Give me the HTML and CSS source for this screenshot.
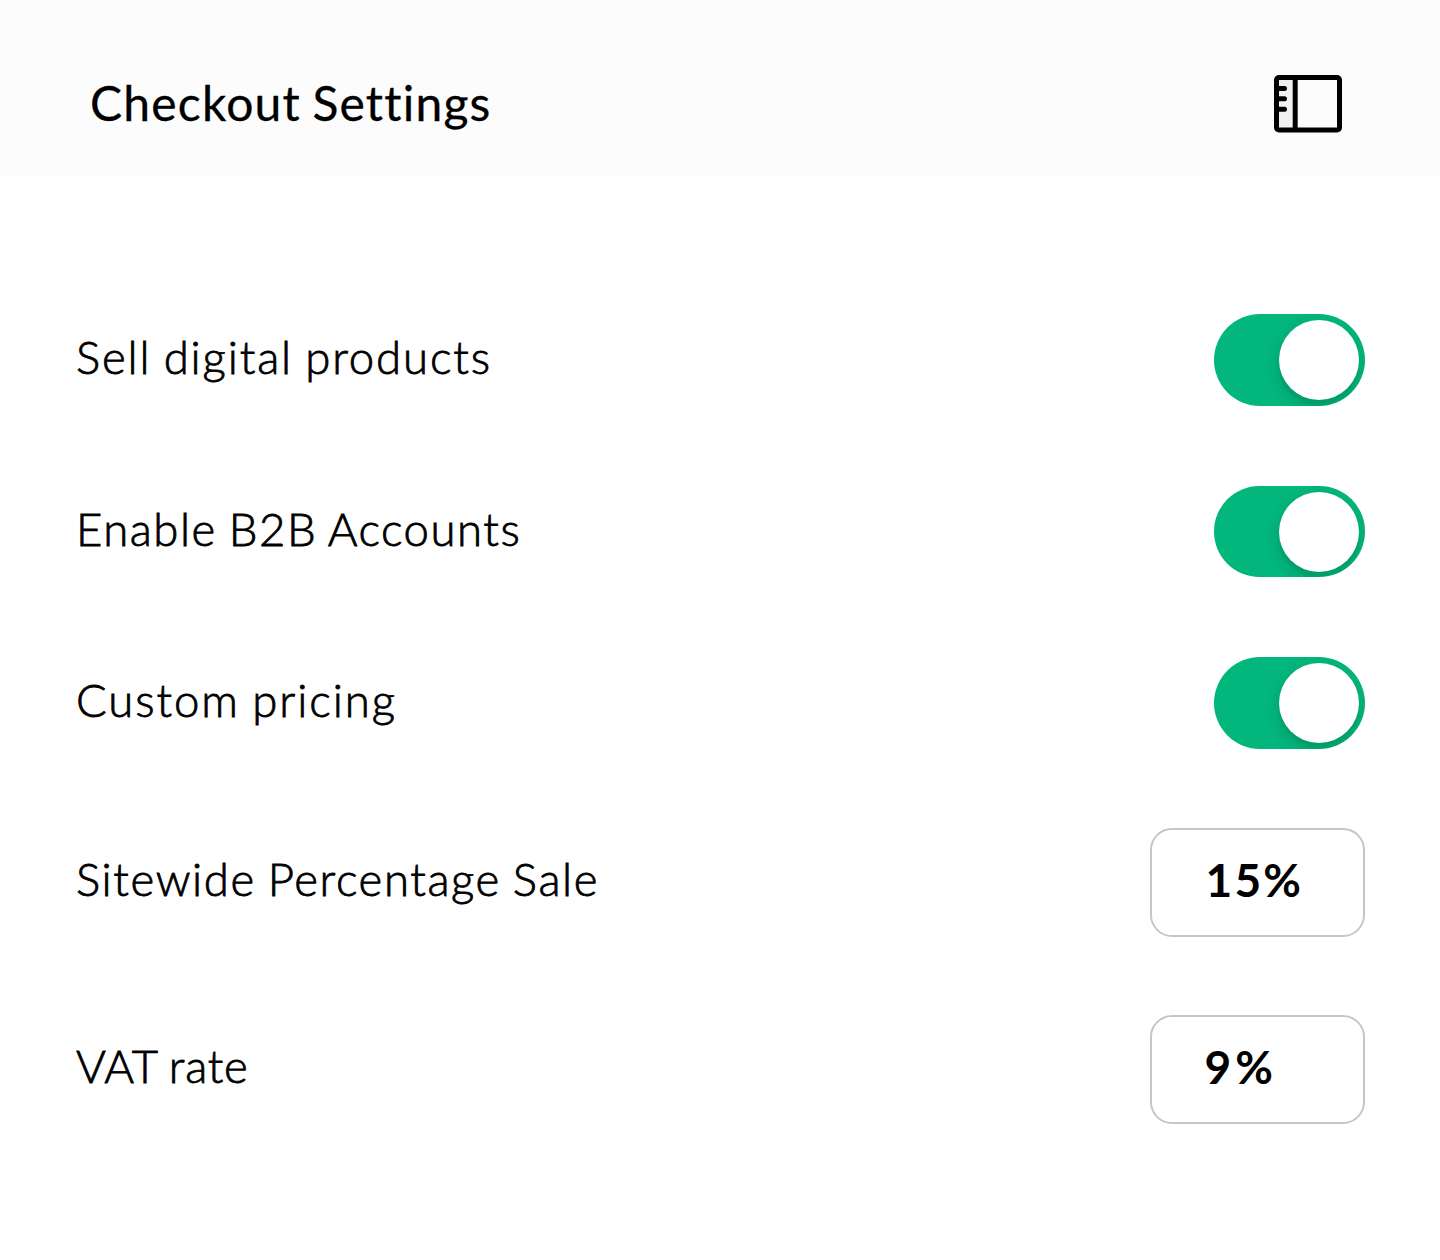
FILE: index.html
```html
<!DOCTYPE html>
<html lang="en">
<head>
<meta charset="utf-8">
<title>Checkout Settings</title>
<link rel="stylesheet" href="styles.css">
</head>
<body>
<header class="header">
  <h1 class="title">Checkout Settings</h1>
  <svg class="panel-icon" width="70" height="60" viewBox="0 0 70 60" fill="none" stroke="#000" stroke-width="5" stroke-linecap="round">
    <path d="M4 4.5H22V56.5H4Z" fill="#f1f1f1" stroke="none"/>
    <rect x="3.5" y="4.5" width="63" height="52.5" rx="2.5"/>
    <path d="M22.2 4.5V56.5" stroke-linecap="butt"/>
    <path d="M4 15.4H11.5M4 25.8H11.5M4 36.3H11.5"/>
  </svg>
</header>
<main class="settings">
  <div class="row"><span class="label digital">Sell digital products</span><span class="toggle" role="switch" aria-checked="true"><span class="knob"></span></span></div>
  <div class="row"><span class="label accounts">Enable B2B Accounts</span><span class="toggle" role="switch" aria-checked="true"><span class="knob"></span></span></div>
  <div class="row"><span class="label pricing">Custom pricing</span><span class="toggle" role="switch" aria-checked="true"><span class="knob"></span></span></div>
  <div class="row field-row"><span class="label sale">Sitewide Percentage Sale</span><span class="field">15%</span></div>
  <div class="row field-row"><span class="label vat">VAT rate</span><span class="field field-vat">9%</span></div>
</main>
</body>
</html>
```
FILE: styles.css
```css
* { box-sizing: border-box; }
body {
  margin: 0;
  min-height: 1260px;
  background: #fff;
  color: #000;
  font-family: "Avenir Next", Avenir, Lato, sans-serif;
}
.header {
  height: 177px;
  padding: 28px 97px 0 90px;
  display: flex;
  align-items: center;
  justify-content: space-between;
  background: #fcfcfc;
}
.title {
  margin: 0;
  font-size: 48px;
  font-weight: 400;
  line-height: 60px;
  letter-spacing: 1.2px;
  word-spacing: -2px;
  -webkit-text-stroke: 0.3px #000;
}
.panel-icon { display: block; }
.settings {
  padding: 137.4px 75.5px 0 76px;
  display: flex;
  flex-direction: column;
  gap: 80px;
}
.row {
  height: 91.5px;
  display: flex;
  align-items: center;
  justify-content: space-between;
}
.field-row { height: 107px; }
.label {
  padding-bottom: 6px;
  font-size: 45.5px;
  font-weight: 300;
  line-height: 60px;
  word-spacing: -2px;
  white-space: nowrap;
  -webkit-text-stroke: 0.8px #000;
}
.digital { letter-spacing: 1.87px; }
.accounts { letter-spacing: 1.55px; }
.pricing { letter-spacing: 1.95px; }
.sale { letter-spacing: 1.6px; }
.vat { letter-spacing: 0.8px; }
.toggle {
  width: 150.5px;
  height: 91.5px;
  padding: 5.8px 5.5px;
  display: flex;
  justify-content: flex-end;
  border-radius: 46px;
  background: #03b67c;
  overflow: hidden;
}
.knob {
  width: 80px;
  height: 80px;
  border-radius: 50%;
  background: #fff;
  box-shadow: 0 6px 16px rgba(0, 0, 0, 0.15), 0 6px 2px rgba(0, 0, 0, 0.04);
}
.field {
  width: 215px;
  height: 108.5px;
  margin-right: -0.5px;
  padding: 0 0 6px 53.5px;
  display: flex;
  align-items: center;
  border: 2px solid #c6c6c6;
  border-radius: 22px;
  font-size: 46px;
  font-weight: 700;
  letter-spacing: 2.2px;
}
.field-vat {
  padding-left: 52.5px;
  letter-spacing: 4px;
}
```
